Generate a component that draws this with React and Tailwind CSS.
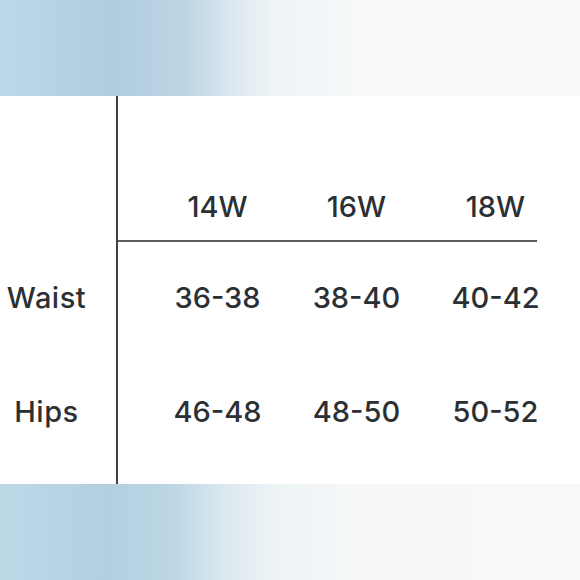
const sizes = ["14W", "16W", "18W"];

const rows = [
    { label: "Waist", values: ["36-38", "38-40", "40-42"], h: "h-[112px]" },
    { label: "Hips", values: ["46-48", "48-50", "50-52"], h: "h-[116px]" },
];

function Band() {
    return (
        <div className="h-[96px] w-full bg-[linear-gradient(90deg,#bcd8e8_0%,#b1ccdd_20%,#bcd6e5_32%,#dbe8ef_40%,#eef3f6_47%,#f6f8f9_60%,#fafafa_100%)]" />
    );
}

export default function App() {
    return (
        <div className="w-[580px] h-[580px] bg-white font-['Inter',sans-serif] font-medium text-[#2b3035] flex flex-col">
            <Band />
            <div className="h-[388px] flex">
                {/* row labels */}
                <div className="w-[118px] border-r-2 border-[#3f4245] pt-[146px]">
                    {rows.map((r) => (
                        <div key={r.label} className={`${r.h} w-[93px] flex items-center justify-center text-[29px] tracking-[0.5px]`}>
                            {r.label}
                        </div>
                    ))}
                </div>

                <div className="flex flex-col">
                    <div className="h-[146px] w-[419px] border-b-2 border-[#5a5d60] flex items-end pb-[15px]">
                        <div className="grid grid-cols-[139px_139px_139px] pl-[30px]">
                            {sizes.map((s) => (
                                <div key={s} className="h-[36px] flex items-center justify-center text-[29px]">
                                    {s}
                                </div>
                            ))}
                        </div>
                    </div>
                    {rows.map((r) => (
                        <div key={r.label} className={`${r.h} grid grid-cols-[139px_139px_139px] pl-[30px]`}>
                            {r.values.map((v) => (
                                <div key={v} className="flex items-center justify-center text-[29px]">
                                    {v}
                                </div>
                            ))}
                        </div>
                    ))}
                </div>
            </div>
            <div className="h-[96px] w-full bg-[linear-gradient(90deg,#bdd9e8_0%,#b3cfe0_18%,#bcd6e5_30%,#d9e7ef_38%,#ecf2f5_46%,#f5f7f8_60%,#f9f9f9_100%)]" />
        </div>
    );
}
